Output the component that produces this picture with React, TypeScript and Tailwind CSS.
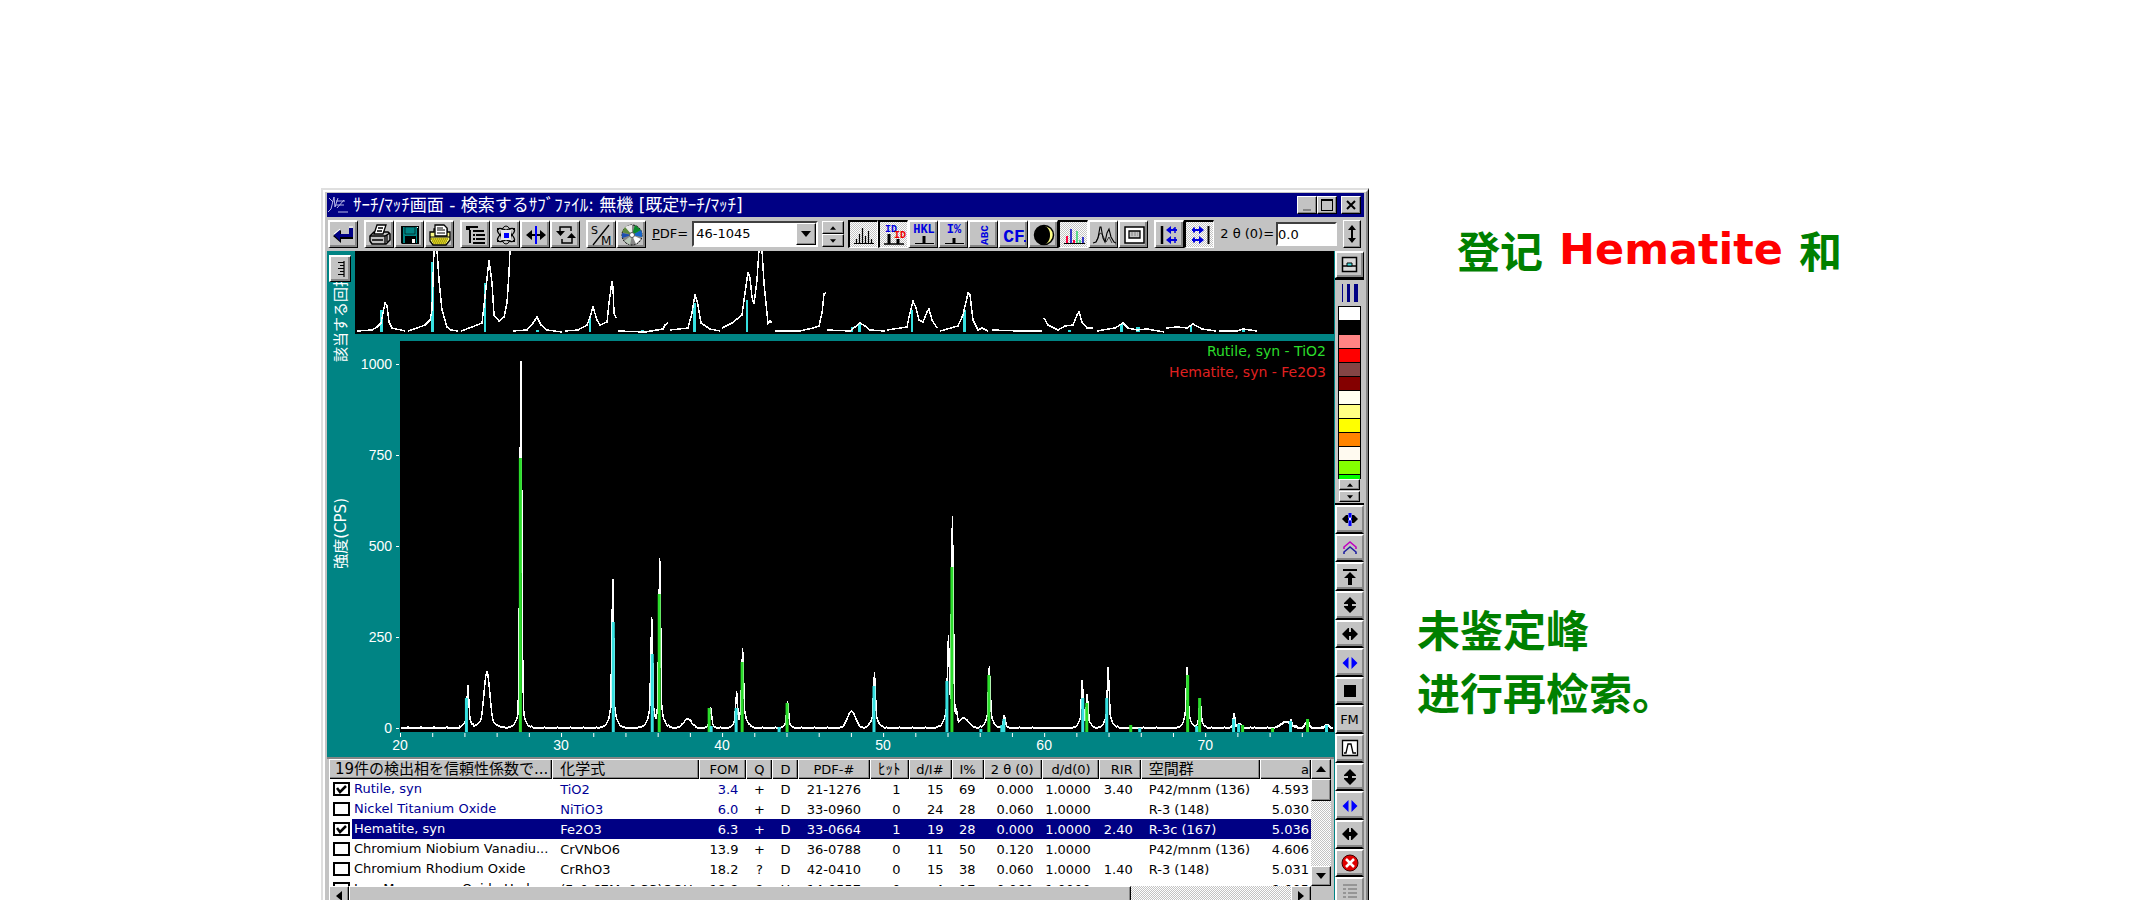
import { useState } from "react";
import type { ReactNode } from "react";
import clsx from "clsx";

const BASELINE = 387;
const PLOT_W = 935;
const PLOT_H = 391;

// [position, height, half width]
const PEAKS: number[][] = [
  [68, 43, 1], [87, 56, 3], [121, 367, 1], [213, 149, 1], [252, 110, 1], [260, 170, 1],
  [288, 9, 4], [311, 21, 1], [337, 37, 1], [343, 80, 1], [388, 27, 1], [452, 17, 4],
  [475, 56, 1], [549, 93, 1], [553, 212, 1], [557, 20, 1], [564, 10, 5], [590, 62, 1],
  [605, 13, 1], [683, 48, 1], [688, 34, 1], [709, 61, 1], [788, 61, 1], [801, 30, 1],
  [835, 15, 1], [840, 4, 2], [887, 6, 5], [892, 9, 1], [908, 6, 2], [928, 3, 2],
];

// [position, top]
const RUTILE: number[][] = [
  [120, 117], [259, 253], [309, 367], [342, 321], [387, 362], [552, 226], [589, 334],
  [687, 362], [731, 384], [788, 334], [800, 357], [843, 384], [873, 387], [908, 378],
];

const HEMATITE: number[][] = [
  [66, 357], [213, 281], [252, 313], [311, 385], [336, 367], [379, 386], [474, 345],
  [547, 340], [581, 388], [602, 384], [604, 378], [683, 357], [707, 357], [740, 387],
  [797, 385], [834, 378], [839, 383], [891, 380], [927, 384],
];

const STRIP_LINES = [
  "2,80 17,79 22,76 26,72 28,62 30,52 32,55 34,71 37,77 50,80",
  "53,80 62,77 70,74 75,69 77,59 79,-1",
  "82,-1 84,29 87,59 92,76 96,79 103,80",
  "106,80 117,76 127,72 130,46 134,9 137,32 139,64 144,70 149,66 152,52 154,22 155,-1",
  "158,80 172,79 178,72 182,66 186,74 192,79 207,81",
  "210,80 223,79 232,74 235,66 238,56 242,69 245,74 252,71 254,52 257,30 258,36 259,62 261,67",
  "263,80 290,81 308,78 310,74 313,72",
  "315,79 333,77 337,62 340,43 343,54 346,72 355,78 365,80",
  "367,77 377,72 387,64 390,42 393,21 395,27 397,46 399,53 402,29 404,-1",
  "407,-1 409,32 412,62 413,72 415,70 417,72",
  "420,80 445,80 458,77 464,75 467,62 469,43 471,42",
  "472,79 495,80 505,72 510,75 515,79 530,80",
  "532,79 552,76 554,66 558,50 561,57 564,69 568,71 572,61 574,58 577,69 582,77",
  "585,80 603,75 608,64 613,42 615,44 618,69 623,79 627,77 633,80",
  "637,79 665,80 687,80",
  "689,67 693,74 703,79 710,75 718,74 722,64 724,61 727,71 732,77 738,77",
  "742,80 760,77 768,72 773,77 782,79 792,78 809,81",
  "811,77 822,76 832,77 838,73 847,78 861,80",
  "864,80 882,80 888,78 902,80",
];

// [position, top, width]
const STRIP_BARS: number[][] = [
  [25, 59, 3], [76, 11, 3], [129, 32, 2], [181, 79, 3], [234, 66, 2], [286, 79, 3],
  [338, 52, 3], [391, 49, 2], [443, 79, 3], [496, 76, 2], [503, 73, 3], [556, 59, 2],
  [608, 59, 3], [660, 79, 3], [713, 79, 3], [765, 73, 3], [781, 76, 4], [835, 75, 2], [887, 77, 3],
];

function buildTrace() {
  const points: string[] = [];
  for (let x = 1; x < PLOT_W; x += 1) {
    let h = 0;
    for (const [p, height, w] of PEAKS) {
      const d = (x - p) / w;
      const core = height * Math.exp(-d * d * 0.5);
      const tail = (Math.min(height, 90) * 0.35) / (1 + (d * d) / (w > 2 ? 3 : 8));
      if (Math.abs(x - p) < 22) h = Math.max(h, core, tail - 1);
    }
    const noise = Math.sin(x * 1.7) * Math.sin(x * 0.23) > 0.8 ? 1 : 0;
    points.push(`${x},${Math.round(BASELINE - h - noise)}`);
  }
  return points.join(" ");
}

const TRACE = buildTrace();

const COLUMNS = [
  { label: "19件の検出相を信頼性係数で...", width: 223, align: "text-left", pad: "pl-[6px]" },
  { label: "化学式", width: 147, align: "text-left", pad: "pl-2" },
  { label: "FOM", width: 47, align: "text-right", pad: "pr-2" },
  { label: "Q", width: 26, align: "text-center", pad: "" },
  { label: "D", width: 26, align: "text-center", pad: "" },
  { label: "PDF-#", width: 71, align: "text-center", pad: "" },
  { label: "ﾋｯﾄ", width: 39, align: "text-right", pad: "pr-2" },
  { label: "d/I#", width: 43, align: "text-right", pad: "pr-2" },
  { label: "I%", width: 32, align: "text-right", pad: "pr-2" },
  { label: "2 θ (0)", width: 58, align: "text-right", pad: "pr-2" },
  { label: "d/d(0)", width: 57, align: "text-right", pad: "pr-2" },
  { label: "RIR", width: 42, align: "text-right", pad: "pr-2" },
  { label: "空間群", width: 119, align: "text-left", pad: "pl-2" },
  { label: "a", width: 51, align: "text-right", pad: "pr-[2px]" },
];

const ROWS = [
  { on: true, known: true, cells: ["Rutile, syn", "TiO2", "3.4", "+", "D", "21-1276", "1", "15", "69", "0.000", "1.0000", "3.40", "P42/mnm (136)", "4.593"] },
  { on: false, known: true, cells: ["Nickel Titanium Oxide", "NiTiO3", "6.0", "+", "D", "33-0960", "0", "24", "28", "0.060", "1.0000", "", "R-3 (148)", "5.030"] },
  { on: true, known: true, selected: true, cells: ["Hematite, syn", "Fe2O3", "6.3", "+", "D", "33-0664", "1", "19", "28", "0.000", "1.0000", "2.40", "R-3c (167)", "5.036"] },
  { on: false, cells: ["Chromium Niobium Vanadiu...", "CrVNbO6", "13.9", "+", "D", "36-0788", "0", "11", "50", "0.120", "1.0000", "", "P42/mnm (136)", "4.606"] },
  { on: false, cells: ["Chromium Rhodium Oxide", "CrRhO3", "18.2", "?", "D", "42-0410", "0", "15", "38", "0.060", "1.0000", "1.40", "R-3 (148)", "5.031"] },
  { on: false, cells: ["Iron Manganese Oxide Hydr...", "(Fe0.67Mn0.33)OOH", "18.8", "?", "H", "14-0557", "0", "4", "17", "0.060", "1.0000", "", "", "9.005"] },
];

const SWATCHES = [
  "bg-white", "bg-black", "bg-[#ff8484]", "bg-[#ff0000]", "bg-[#844545]", "bg-[#840000]", "bg-[#fffff0]",
  "bg-[#ffff84]", "bg-[#ffff00]", "bg-[#ff8400]", "bg-[#fffaf0]", "bg-[#84ff00]",
];

const RAISED =
  "border-t-2 border-l-2 border-r border-b border-t-white border-l-white border-r-black border-b-black bg-[#c3c3c3] shadow-[inset_-2px_-2px_0_#868686]";
const THIN =
  "border border-t-white border-l-white border-r-black border-b-black bg-[#c3c3c3] shadow-[inset_-1px_-1px_0_#868686]";
const CHECKER =
  "bg-[conic-gradient(#ffffff_25%,#c3c3c3_0_50%,#ffffff_0_75%,#c3c3c3_0)] [background-size:2px_2px]";
const PRESSED =
  "border-t-2 border-l-2 border-r border-b border-t-black border-l-black border-r-white border-b-white";

function Svg({ children }: { children: ReactNode }) {
  return (
    <svg viewBox="0 0 24 24" className="h-6 w-6 shrink-0" fill="none" aria-hidden="true">
      {children}
    </svg>
  );
}

function ToolButton({ label, pressed, children }: { label: string; pressed?: boolean; children: ReactNode }) {
  return (
    <button
      type="button"
      aria-label={label}
      className={clsx(
        "flex h-7 w-[30px] shrink-0 items-center justify-center overflow-hidden",
        pressed ? [PRESSED, CHECKER] : RAISED
      )}
    >
      {children}
    </button>
  );
}

function SideButton({ label, children }: { label: string; children: ReactNode }) {
  return (
    <button
      type="button"
      aria-label={label}
      className="flex min-h-0 w-full flex-1 items-center justify-center border-t-2 border-r-2 border-b-2 border-l-2 border-t-white border-r-[#868686] border-b-black border-l-white bg-[#c3c3c3] shadow-[inset_0_-2px_0_#868686]"
    >
      {children}
    </button>
  );
}

function Triangle({ dir, size = 8 }: { dir: "up" | "down" | "left" | "right"; size?: number }) {
  const d = {
    up: "M0 8L5 2L10 8Z",
    down: "M0 2L5 8L10 2Z",
    left: "M8 0L2 5L8 10Z",
    right: "M2 0L8 5L2 10Z",
  }[dir];
  return (
    <svg viewBox="0 0 10 10" width={size} height={size} aria-hidden="true">
      <path d={d} />
    </svg>
  );
}

function SpinPair({ name, width }: { name: string; width: string }) {
  return (
    <div className={clsx("flex shrink-0 flex-col", width)}>
      <button type="button" aria-label={`${name} up`} className={clsx("flex h-[13px] items-center justify-center", THIN)}>
        <Triangle dir="up" size={6} />
      </button>
      <button type="button" aria-label={`${name} down`} className={clsx("flex h-[13px] items-center justify-center", THIN)}>
        <Triangle dir="down" size={6} />
      </button>
    </div>
  );
}

/* ---------- toolbar icons ---------- */

const EnterIcon = () => (
  <Svg>
    <path d="M1 13l8-6v4h8V6h4v10H9v4z" fill="#000" />
    <path d="M2 12l6-5v4h9V5h4v9H8v4z" fill="#000084" />
    <path d="M17 4h4M2 11l6-5" stroke="#fff" />
  </Svg>
);

const PrinterIcon = () => (
  <Svg>
    <path d="M2 13l4-4h14l2 2v6l-4 4H4l-2-3z" fill="#c3c3c3" stroke="#000" strokeWidth="1.5" />
    <path d="M6 11l3-9h9l-3 9z" fill="#fff" stroke="#000" strokeWidth="1.3" />
    <path d="M10 5h5M9 8h5M2 13h15l5-3M17 13v8M4 17h11M19 12v7" stroke="#000" strokeWidth="1.3" />
  </Svg>
);

const SaveIcon = () => (
  <Svg>
    <path d="M3 3h18v18H4l-1-1z" fill="#000" />
    <path d="M5 4h14v9H5z" fill="#008484" />
    <path d="M7 4h10v7H7z" fill="#008484" stroke="#000" strokeWidth=".6" />
    <path d="M5 13h2v7H5zM18 13h1v7h-1z" fill="#008484" />
    <path d="M14 16h3v4h-3zM19 4h1v1h-1z" fill="#fff" />
  </Svg>
);

const CopyPrintIcon = () => (
  <Svg>
    <path d="M2 9h4V6h13v3h3v8l-4 5H5l-3-4z" fill="#f7f784" stroke="#000" strokeWidth="1.3" />
    <path d="M7 13V2h9l3 3v8z" fill="#fff" stroke="#000" strokeWidth="1.3" />
    <path d="M9 5h6M9 7h8M9 10h8M2 14h20" stroke="#000" />
    <path d="M3 16h17M4 18h15M5 20h13" stroke="#c8b800" strokeWidth="1.500" />
    <path d="M3 16h17M4 18h15M5 20h13" stroke="#868600" strokeDasharray="1 1" />
  </Svg>
);

const ListIcon = () => (
  <Svg>
    <path d="M2 4h12M6 7v13M9 8h11M9 12h2M12 12h9M9 16h2M12 16h9M9 20h12" stroke="#000" strokeWidth="2" />
    <path d="M2 5h4v2H2z" fill="#000" />
  </Svg>
);

const AtomIcon = () => (
  <Svg>
    <ellipse cx="12" cy="12" rx="10" ry="4" stroke="#000" transform="rotate(35 12 12)" strokeWidth="1.3" />
    <ellipse cx="12" cy="12" rx="10" ry="4" stroke="#000" transform="rotate(-35 12 12)" strokeWidth="1.3" />
    <ellipse cx="12" cy="12" rx="5" ry="9" stroke="#000" strokeWidth="1" />
    <path d="M7 7h10v10H7z" fill="#e8e8e8" />
    <path d="M10 10h5v5h-5z" fill="#0000ff" />
    <path d="M3 5h2v2H3zM19 5h2v2h-2zM3 17h2v2H3zM19 17h2v2h-2z" fill="#000" />
  </Svg>
);

const SplitIcon = () => (
  <Svg>
    <path d="M12 3v18" stroke="#0000ff" strokeWidth="2" />
    <path d="M2 12l6-5v4h3v2H8v4zM22 12l-6-5v4h-3v2h3v4z" fill="#000" />
  </Svg>
);

const SwapIcon = () => (
  <Svg>
    <path d="M6 9V4h11v4M18 15v5H8v-4" stroke="#000" strokeWidth="1.5" />
    <path d="M2 8h9l-4.500 5zM13 15h9l-4.500-5z" fill="#000" />
  </Svg>
);

const SearchMatchIcon = () => (
  <Svg>
    <text x="1" y="11" fontSize="11" fill="#000" fontFamily="DejaVu Sans">S</text>
    <text x="11" y="22" fontSize="12" fill="#000" fontFamily="DejaVu Sans">M</text>
    <path d="M19 2L3 22" stroke="#000" strokeWidth="1.3" />
  </Svg>
);

const DiscIcon = () => (
  <Svg>
    <circle cx="12" cy="12" r="10" fill="#868686" stroke="#000" strokeDasharray="2 1" />
    <path d="M12 12L4 5a10 10 0 0 1 8-3z" fill="#e8e8e8" />
    <path d="M12 12L2 9l3-5z" fill="#5c8a3c" />
    <path d="M12 12L2 15v-5z" fill="#1d4fb0" />
    <path d="M12 12l9-5a10 10 0 0 1 1 7z" fill="#1565c8" />
    <path d="M12 12l3-10 6 5z" fill="#0a8a2a" />
    <path d="M12 12l9 4-5 5z" fill="#fff" />
    <path d="M12 12l-2 10-6-4z" fill="#b9c9b9" />
    <circle cx="12" cy="12" r="2.5" fill="#fff" stroke="#555" />
  </Svg>
);

const SticksIcon = () => (
  <Svg>
    <path d="M2 20.5h20" stroke="#000" />
    <path d="M4.500 20v-4M7.500 20v-9M10.500 20V5M13.500 20v-7M16.500 20V8M19.500 20v-4" stroke="#000" strokeWidth="1.2" />
  </Svg>
);

const IdIcon = () => (
  <Svg>
    <text x="3" y="9" fontSize="10" fontWeight="bold" fill="#0000e0" fontFamily="Liberation Mono">ID</text>
    <text x="12" y="15" fontSize="10" fontWeight="bold" fill="#f00000" fontFamily="Liberation Mono">ID</text>
    <path d="M2 21h20" stroke="#000" strokeWidth="1.5" />
    <path d="M7 11v10M16 16v5" stroke="#000" strokeWidth="3" />
  </Svg>
);

const HklIcon = () => (
  <Svg>
    <text x="12" y="10" textAnchor="middle" fontSize="12" fontWeight="bold" fill="#0000e0" fontFamily="Liberation Mono">HKL</text>
    <path d="M3 20.500h19" stroke="#000" />
    <path d="M12 13v7" stroke="#000" strokeWidth="3" />
  </Svg>
);

const PercentIcon = () => (
  <Svg>
    <text x="12" y="10" textAnchor="middle" fontSize="12" fontWeight="bold" fill="#0000e0" fontFamily="Liberation Mono">I%</text>
    <path d="M3 20.500h19" stroke="#000" />
    <path d="M12 15v5" stroke="#000" strokeWidth="3" />
  </Svg>
);

const AbcIcon = () => (
  <Svg>
    <text x="-12" y="16" textAnchor="middle" fontSize="11" fontWeight="bold" fill="#0000e0" fontFamily="Liberation Mono" transform="rotate(-90)">ABC</text>
  </Svg>
);

const CfIcon = () => (
  <Svg>
    <text x="12" y="19" textAnchor="middle" fontSize="18" fontWeight="bold" fill="#0000e0" fontFamily="Liberation Mono">CF</text>
    <path d="M22 17h2v2h-2z" fill="#0000e0" />
  </Svg>
);

const MoonIcon = () => (
  <Svg>
    <circle cx="12" cy="12" r="9.5" fill="#ffff84" stroke="#000" strokeWidth="1.5" />
    <path d="M12 2.500a9.500 9.500 0 0 0 0 19c4-1 6-5 6-9.500s-2-8-6-9.500z" fill="#000" />
  </Svg>
);

const ColorSticksIcon = () => (
  <Svg>
    <path d="M2 20.500h21" stroke="#000" />
    <path d="M5 20v-7M12 20v-3" stroke="#ff0040" strokeWidth="2" />
    <path d="M9 20V6M21 20v-6" stroke="#0000c0" strokeWidth="1.500" />
    <path d="M15 20V8M18 20v-3" stroke="#59d98a" strokeWidth="2" />
  </Svg>
);

const PeaksIcon = () => (
  <Svg>
    <path d="M1 20l3-1 2-4 2-11h1l2 11 2 4 2-9 2-4 2 8 3 5 2 1" stroke="#000" strokeWidth="1.1" />
    <path d="M4 19l4-9 2 1 4 8 3-5 3 6" stroke="#000" strokeWidth=".7" />
  </Svg>
);

const MonitorIcon = () => (
  <Svg>
    <path d="M3 4h19v16H3z" fill="#fff" stroke="#000" strokeWidth="1.5" />
    <path d="M7 8h11v7H7z" fill="#c3c3c3" stroke="#000" strokeWidth="1.3" />
    <path d="M9 10h7M9 12h7" stroke="#868686" strokeDasharray="2 1" />
  </Svg>
);

const AlignLeftIcon = () => (
  <Svg>
    <path d="M4 3v18" stroke="#000" strokeWidth="2.500" />
    <path d="M8 7l5-4v3h6v2h-6v3zM8 17l5-4v3h6v2h-6v3z" fill="#0000e0" />
    <path d="M17 4v2h-2M17 10V8M17 14v2M17 20v-2" stroke="#0000e0" strokeWidth="1.500" />
  </Svg>
);

const AlignRightIcon = () => (
  <Svg>
    <path d="M20.500 3v18" stroke="#000" strokeWidth="2" />
    <path d="M16 7l-5-4v3H4v2h7v3zM16 17l-5-4v3H4v2h7v3z" fill="#0000e0" />
    <path d="M6 4.500v5M6 14.500v5" stroke="#0000e0" strokeWidth="2" />
  </Svg>
);

/* ---------- side bar icons ---------- */

const UpDown = () => (
  <Svg>
    <path d="M12 4l6 6v1h-4v2h4v1l-6 6-6-6v-1h4v-2H6v-1z" fill="#000" />
  </Svg>
);

const LeftRight = () => (
  <Svg>
    <path d="M4 12l6-6h1v4h2V6h1l6 6-6 6h-1v-4h-2v4h-1z" fill="#000" />
  </Svg>
);

const BlueArrows = () => (
  <Svg>
    <path d="M10.500 6v12l-6-6zM13.500 6v12l6-6z" fill="#0000ff" />
  </Svg>
);

const MoveIcon = () => (
  <Svg>
    <path d="M12 6v4M12 14v5" stroke="#0000ff" strokeWidth="3" />
    <path d="M10 10.500h4v3h-4z" fill="#0000ff" />
    <path d="M11 11h2v2h-2z" fill="#fff" />
    <path d="M4 12l4-4h2v8H8zM20 12l-4-4h-2v8h2z" fill="#000" />
  </Svg>
);

function SideBar() {
  return (
    <aside className="flex w-[30px] shrink-0 flex-col border-l border-[#008484] bg-[#c3c3c3]">
      <button type="button" aria-label="Panel" className={clsx("flex h-[27px] items-center justify-center", RAISED)}>
        <Svg>
          <path d="M4.500 4.500h14v14h-14z" fill="#d8d8d8" stroke="#000" strokeWidth="1.5" />
          <path d="M5 13h13" stroke="#000" strokeWidth="1.500" />
          <path d="M9 10h5v3H9z" fill="#40e0e0" stroke="#000" />
        </Svg>
      </button>
      <div className="h-0.5 bg-black" />
      <div className="flex flex-col items-center pb-px">
        <svg viewBox="0 0 18 18" className="mt-1 mb-1 h-[18px] w-[18px]" aria-hidden="true">
          <path d="M1.500 0v18" stroke="#000084" />
          <path d="M7.500 0v18" stroke="#000084" strokeWidth="3" />
          <path d="M15 0v18" stroke="#000084" strokeWidth="4" />
        </svg>
        <div className="flex w-[23px] flex-col border-x border-t border-black">
          {SWATCHES.map((c) => (
            <button key={c} type="button" aria-label={`Color ${c}`} className={clsx("h-[14px] border-b border-black", c)} />
          ))}
          <span className="h-1 bg-[#00ff00]" />
        </div>
        <button type="button" aria-label="Previous colors" className={clsx("flex h-[11px] w-[21px] items-center justify-center", THIN)}>
          <Triangle dir="up" size={6} />
        </button>
        <button type="button" aria-label="Next colors" className={clsx("mt-px flex h-[11px] w-[21px] items-center justify-center", THIN)}>
          <Triangle dir="down" size={6} />
        </button>
      </div>
      <div className="h-0.5 bg-black" />
      <div className="flex min-h-0 flex-1 flex-col">
        <SideButton label="Move"><MoveIcon /></SideButton>
        <SideButton label="Stack">
          <Svg>
            <path d="M6 13v-2l6-5 6 5v2" stroke="#c000c0" strokeWidth="1.600" />
            <path d="M6 18v-2l6-5 6 5v2" stroke="#2020a0" strokeWidth="1.600" />
          </Svg>
        </SideButton>
        <SideButton label="Top">
          <Svg>
            <path d="M5 4h14v2H5zM12 7l6 6h-4v7h-4v-7H6z" fill="#000" />
          </Svg>
        </SideButton>
        <SideButton label="Height"><UpDown /></SideButton>
        <SideButton label="Width"><LeftRight /></SideButton>
        <SideButton label="Shift"><BlueArrows /></SideButton>
        <SideButton label="Stop">
          <Svg><path d="M6 6h12v12H6z" fill="#000" /></Svg>
        </SideButton>
        <SideButton label="FM"><span className="text-[13px] leading-none">FM</span></SideButton>
        <SideButton label="Peak">
          <Svg>
            <path d="M4.500 4.500h15v15h-15z" fill="#fff" stroke="#000" strokeWidth="1.3" />
            <path d="M6 17h2l2-9h3l2 9h3" stroke="#000" strokeWidth="1.3" />
          </Svg>
        </SideButton>
        <SideButton label="Scale"><UpDown /></SideButton>
        <SideButton label="Pan"><BlueArrows /></SideButton>
        <SideButton label="Stretch"><LeftRight /></SideButton>
        <SideButton label="Close">
          <Svg>
            <circle cx="12" cy="12" r="8" fill="#e00000" stroke="#400000" />
            <path d="M8 8l8 8M16 8l-8 8" stroke="#fff" strokeWidth="2.500" />
          </Svg>
        </SideButton>
        <SideButton label="List">
          <Svg>
            <path d="M5 5h14M5 9h3M10 9h9M5 13h3M10 13h9M5 17h3M10 17h9M5 21h3M10 21h9" stroke="#868686" strokeWidth="1.500" />
          </Svg>
        </SideButton>
      </div>
    </aside>
  );
}

function TitleBar() {
  return (
    <header className="flex h-6 items-center bg-[#000084] pr-[3px] text-white">
      <svg viewBox="0 0 22 18" className="h-[18px] w-[22px]" fill="none" stroke="#b8b8e8" aria-hidden="true">
        <path d="M1 16l3-3L7 1l1 10 3-9M9 5h9M9 9h8M2 2l4 4M17 4l-7 8M11 16h10" />
      </svg>
      <h1 className="min-w-0 flex-1 truncate pl-1 text-[17px] leading-6">
        ｻｰﾁ/ﾏｯﾁ画面 - 検索するｻﾌﾞﾌｧｲﾙ: 無機 [既定ｻｰﾁ/ﾏｯﾁ]
      </h1>
      <button type="button" aria-label="Minimize" className={clsx("flex h-[18px] w-5 items-end justify-center pb-0.5", THIN)}>
        <span className="h-0.5 w-2 bg-[#868686]" />
      </button>
      <button type="button" aria-label="Maximize" className={clsx("flex h-[18px] w-5 items-center justify-center", THIN)}>
        <span className="h-3 w-3 border border-t-2 border-black" />
      </button>
      <button type="button" aria-label="Close window" className={clsx("ml-1 flex h-[18px] w-5 items-center justify-center", THIN)}>
        <svg viewBox="0 0 10 10" className="h-2.5 w-2.5" aria-hidden="true">
          <path d="M1 1l8 8M9 1L1 9" stroke="#000" strokeWidth="2" />
        </svg>
      </button>
    </header>
  );
}

function ToolBar() {
  return (
    <div className="flex h-[34px] items-center gap-1.5 overflow-hidden pl-px text-black">
      <ToolButton label="Return"><EnterIcon /></ToolButton>
      <div className="flex">
        <ToolButton label="Print"><PrinterIcon /></ToolButton>
        <ToolButton label="Save"><SaveIcon /></ToolButton>
        <ToolButton label="Report"><CopyPrintIcon /></ToolButton>
      </div>
      <div className="flex">
        <ToolButton label="List"><ListIcon /></ToolButton>
        <ToolButton label="Elements"><AtomIcon /></ToolButton>
        <ToolButton label="Split"><SplitIcon /></ToolButton>
        <ToolButton label="Swap"><SwapIcon /></ToolButton>
      </div>
      <div className="flex">
        <ToolButton label="Search match"><SearchMatchIcon /></ToolButton>
        <ToolButton label="Database"><DiscIcon /></ToolButton>
      </div>
      <div className="flex shrink-0 items-center gap-1">
        <label htmlFor="pdf" className="text-[13px]"><u>P</u>DF=</label>
        <div className="relative">
          <select
            id="pdf"
            defaultValue="46-1045"
            className="h-[26px] w-[126px] appearance-none border-2 border-t-[#404040] border-l-[#404040] border-r-white border-b-white bg-white pl-0.5 text-[13px] leading-5"
          >
            <option>46-1045</option>
          </select>
          <span className={clsx("pointer-events-none absolute top-0.5 right-0.5 flex h-[22px] w-5 items-center justify-center", THIN)}>
            <Triangle dir="down" size={10} />
          </span>
        </div>
        <SpinPair name="PDF" width="w-[22px]" />
      </div>
      <div className="-ml-0.5 flex">
        <ToolButton label="Sticks" pressed><SticksIcon /></ToolButton>
        <ToolButton label="ID labels" pressed><IdIcon /></ToolButton>
        <ToolButton label="HKL"><HklIcon /></ToolButton>
        <ToolButton label="Intensity"><PercentIcon /></ToolButton>
        <ToolButton label="ABC"><AbcIcon /></ToolButton>
        <ToolButton label="CF"><CfIcon /></ToolButton>
        <ToolButton label="Contrast"><MoonIcon /></ToolButton>
        <ToolButton label="Colored sticks" pressed><ColorSticksIcon /></ToolButton>
        <ToolButton label="Overlay"><PeaksIcon /></ToolButton>
        <ToolButton label="Display"><MonitorIcon /></ToolButton>
      </div>
      <div className="flex">
        <ToolButton label="Snap left"><AlignLeftIcon /></ToolButton>
        <ToolButton label="Snap right" pressed><AlignRightIcon /></ToolButton>
      </div>
      <div className="flex shrink-0 items-center gap-0.5">
        <label htmlFor="theta" className="text-[13px] whitespace-nowrap">2 θ (0)=</label>
        <input
          id="theta"
          defaultValue="0.0"
          className="h-6 w-[61px] border-2 border-t-[#404040] border-l-[#404040] border-r-white border-b-white bg-white text-[13px]"
        />
      </div>
      <button type="button" aria-label="Adjust offset" className={clsx("flex h-7 w-[18px] shrink-0 items-center justify-center", THIN)}>
        <svg viewBox="0 0 10 20" className="h-5 w-2.5" aria-hidden="true">
          <path d="M5 1l4 5H6v8h3l-4 5-4-5h3V6H1z" />
        </svg>
      </button>
      <span className="h-6 w-px shrink-0 bg-[#404040]" />
    </div>
  );
}

function Chart() {
  return (
    <section className="flex bg-[#008484] text-white">
      <div className="relative flex w-7 shrink-0 flex-col items-center gap-[136px]">
        <div className="flex h-[111px] items-end overflow-hidden">
          <span className="rotate-180 text-[15px] leading-5 whitespace-nowrap [writing-mode:vertical-rl] [text-orientation:sideways]">
            該当する回折線
          </span>
        </div>
        <span className="rotate-180 text-[15px] leading-5 whitespace-nowrap [writing-mode:vertical-rl] [text-orientation:sideways]">
          強度(CPS)
        </span>
        <button type="button" aria-label="Zoom scale" className={clsx("absolute top-1 left-0.5 flex h-[27px] w-[22px] items-center justify-center", RAISED)}>
          <svg viewBox="0 0 10 16" className="h-4 w-2.5" aria-hidden="true">
            <path d="M8 0v16M2 1.500h6M4 4.500h4M2 7.500h6M4 10.500h4M2 13.500h6" stroke="#000" strokeWidth="1.200" />
          </svg>
        </button>
      </div>
      <div className="min-w-0 flex-1">
        <svg
          viewBox="0 0 979 83"
          preserveAspectRatio="none"
          className="block h-[83px] w-full bg-black"
          role="img"
          aria-label="Matched reflections"
        >
          <g fill="#36e0e0">
            {STRIP_BARS.map(([x, y, w]) => (
              <rect key={x} x={x} y={y} width={w} height={81 - y} />
            ))}
          </g>
          <g fill="none" stroke="#fff" strokeWidth="1.5" shapeRendering="crispEdges">
            {STRIP_LINES.map((p) => (
              <polyline key={p} points={p} />
            ))}
          </g>
        </svg>
        <div className="mt-[7px] flex">
          <svg className="block h-[391px] w-[45px] shrink-0 overflow-visible" fill="#fff" aria-hidden="true">
            {[1000, 750, 500, 250, 0].map((v, i) => (
              <g key={v}>
                <text x="37" y={28 + i * 91} textAnchor="end" fontSize="14" fontFamily="Liberation Sans">{v}</text>
                <rect x="41" y={23 + i * 91} width="3" height="1" />
              </g>
            ))}
          </svg>
          <div className="relative min-w-0 flex-1 bg-black">
            <svg
              viewBox={`0 0 ${PLOT_W} ${PLOT_H}`}
              preserveAspectRatio="none"
              className="block h-[391px] w-full"
              role="img"
              aria-label="Diffraction pattern"
            >
              <polyline points={TRACE} fill="none" stroke="#fff" strokeWidth="1.5" shapeRendering="crispEdges" />
              <g fill="#2bdc2b">
                {RUTILE.map(([x, y]) => (
                  <rect key={x} x={x - 1} y={y} width="3" height={PLOT_H - y} />
                ))}
              </g>
              <g fill="#36e0e0">
                {HEMATITE.map(([x, y]) => (
                  <rect key={x} x={x - 1} y={y} width="3" height={PLOT_H - y} />
                ))}
              </g>
            </svg>
            <ul className="absolute top-0 right-2 text-right text-sm leading-[21px]">
              <li className="text-[#2bdc2b]">Rutile, syn - TiO2</li>
              <li className="text-[#e02020]">Hematite, syn - Fe2O3</li>
            </ul>
          </div>
        </div>
        <div className="pl-[45px]">
          <svg className="block h-[25px] w-full overflow-visible" fill="#fff" aria-hidden="true">
            {Array.from({ length: 30 }, (_, i) => 20 + i * 2).map((deg) => (
              <g key={deg}>
                <rect x={`${((deg - 20) / 58) * 100}%`} y="1" width="1" height="4" />
                {deg % 10 === 0 && (
                  <text x={`${((deg - 20) / 58) * 100}%`} y="18" textAnchor="middle" fontSize="14" fontFamily="Liberation Sans">
                    {deg}
                  </text>
                )}
              </g>
            ))}
          </svg>
        </div>
      </div>
    </section>
  );
}

function ResultTable() {
  const [checked, setChecked] = useState(ROWS.map((r) => r.on));

  const toggle = (i: number) => {
    setChecked((prev) => prev.map((v, n) => (n === i ? !v : v)));
  };

  return (
    <section className="border-t-2 border-[#868686] pr-[3px] pl-0.5">
      <div className="flex h-[127px]">
        <div className="min-w-0 flex-1 overflow-hidden bg-white">
          <table className="w-full table-fixed border-collapse text-[13px] leading-[19px]">
            <colgroup>
              {COLUMNS.map((c) => (
                <col key={c.label} style={{ width: c.width }} />
              ))}
            </colgroup>
            <thead>
              <tr className="h-5">
                {COLUMNS.map((c, i) => (
                  <th
                    key={c.label}
                    scope="col"
                    className={clsx(
                      "overflow-hidden bg-[#c3c3c3] p-0 font-normal whitespace-nowrap shadow-[inset_1px_1px_0_#fff,inset_-1px_-1px_0_#000,inset_-2px_-2px_0_#868686]",
                      c.align,
                      c.pad,
                      (i < 2 || i === 6 || i === 12) && "text-[15px]"
                    )}
                  >
                    {c.label}
                  </th>
                ))}
              </tr>
            </thead>
            <tbody>
              {ROWS.map((row, r) => (
                <tr key={row.cells[0]} className={clsx("h-5", row.selected ? "text-white" : row.known && "text-[#000096]")}>
                  {row.cells.map((cell, i) => (
                    <td
                      key={i}
                      className={clsx(
                        "overflow-hidden py-0 whitespace-nowrap",
                        COLUMNS[i].align,
                        i === 0 ? "px-0" : COLUMNS[i].pad || "px-0",
                        row.selected && i > 0 && "bg-[#000084]",
                        !row.selected && i > 2 && "text-black"
                      )}
                    >
                      {i === 0 ? (
                        <div className="flex h-5 items-center">
                          <span className="relative mr-0.5 ml-1 flex shrink-0">
                            <input
                              id={`phase-${r}`}
                              type="checkbox"
                              checked={checked[r]}
                              onChange={() => toggle(r)}
                              className="peer h-[14px] w-[17px] appearance-none border-2 border-black bg-white"
                            />
                            <svg viewBox="0 0 17 14" className="pointer-events-none absolute inset-0 hidden peer-checked:block" aria-hidden="true">
                              <path d="M4 6l3 4 6-6" fill="none" stroke="#000" strokeWidth="2.500" />
                            </svg>
                          </span>
                          <label
                            htmlFor={`phase-${r}`}
                            className={clsx("flex-1 pl-0.5 leading-5", row.selected && "bg-[#000084]")}
                          >
                            {cell}
                          </label>
                        </div>
                      ) : (
                        cell
                      )}
                    </td>
                  ))}
                </tr>
              ))}
            </tbody>
          </table>
        </div>
        <div className={clsx("flex w-5 shrink-0 flex-col", CHECKER)}>
          <button type="button" aria-label="Scroll up" className={clsx("flex h-5 items-center justify-center", THIN)}>
            <Triangle dir="up" size={10} />
          </button>
          <div className={clsx("h-[22px]", THIN)} />
          <button type="button" aria-label="Scroll down" className={clsx("mt-auto flex h-5 items-center justify-center", THIN)}>
            <Triangle dir="down" size={10} />
          </button>
        </div>
      </div>
      <div className="flex h-5 pr-5">
        <button type="button" aria-label="Scroll left" className={clsx("flex w-5 items-center justify-center", THIN)}>
          <Triangle dir="left" size={10} />
        </button>
        <div className={clsx("flex flex-1", CHECKER)}>
          <div className={clsx("w-[83%]", THIN)} />
        </div>
        <button type="button" aria-label="Scroll right" className={clsx("flex w-5 items-center justify-center", THIN)}>
          <Triangle dir="right" size={10} />
        </button>
      </div>
    </section>
  );
}

export default function App() {
  return (
    <main className="grid h-screen grid-cols-[321fr_minmax(0,1048fr)_780fr] items-start overflow-hidden bg-white pt-[188px]">
      <div className="col-start-2 border-t-2 border-r border-l-2 border-t-[#dfdfdf] border-r-black border-l-[#dfdfdf] font-['DejaVu_Sans','Noto_Sans_CJK_JP',sans-serif]">
        <div className="border-t-2 border-r-2 border-l-2 border-t-white border-r-[#868686] border-l-white bg-[#c3c3c3] pt-px pr-0.5 pl-0.5">
          <TitleBar />
          <ToolBar />
          <div className="flex">
            <div className="min-w-0 flex-1">
              <Chart />
              <ResultTable />
            </div>
            <SideBar />
          </div>
        </div>
      </div>

      <div className="font-['Noto_Sans_CJK_SC',sans-serif] text-[43px] leading-[63px] font-bold whitespace-nowrap text-[#008000]">
        <p className="flex items-center gap-4 pt-[30px] pl-[88px]">
          登记
          <strong className="font-['DejaVu_Sans',sans-serif] text-[#ff0000]">Hematite</strong>
          和
        </p>
        <p className="pt-[316px] pl-12">
          未鉴定峰
          <br />
          进行再检索。
        </p>
      </div>
    </main>
  );
}
